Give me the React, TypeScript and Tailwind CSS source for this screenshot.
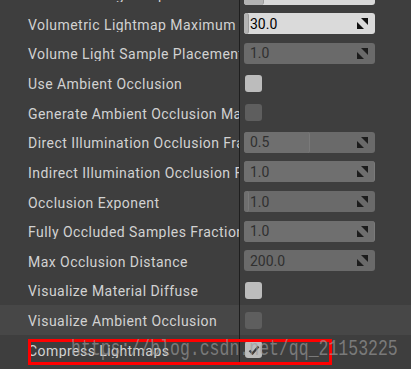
import { type ReactNode } from 'react'

type Row =
  | { label: string; kind: 'num'; value: string; fill: number; enabled: boolean }
  | { label: string; kind: 'check'; checked: boolean; enabled: boolean; hover?: boolean }

const ROWS: Row[] = [
  { label: 'Volumetric Lightmap Detail Cell Size', kind: 'num', value: '200.0', fill: 0.15, enabled: true },
  { label: 'Volumetric Lightmap Maximum Brick Memory Mb', kind: 'num', value: '30.0', fill: 0.03, enabled: true },
  { label: 'Volume Light Sample Placement Scale', kind: 'num', value: '1.0', fill: 0, enabled: false },
  { label: 'Use Ambient Occlusion', kind: 'check', checked: false, enabled: true },
  { label: 'Generate Ambient Occlusion Material Mask', kind: 'check', checked: false, enabled: false },
  { label: 'Direct Illumination Occlusion Fraction', kind: 'num', value: '0.5', fill: 0.5, enabled: false },
  { label: 'Indirect Illumination Occlusion Fraction', kind: 'num', value: '1.0', fill: 1, enabled: false },
  { label: 'Occlusion Exponent', kind: 'num', value: '1.0', fill: 0.04, enabled: false },
  { label: 'Fully Occluded Samples Fraction', kind: 'num', value: '1.0', fill: 1, enabled: false },
  { label: 'Max Occlusion Distance', kind: 'num', value: '200.0', fill: 0, enabled: false },
  { label: 'Visualize Material Diffuse', kind: 'check', checked: false, enabled: true },
  { label: 'Visualize Ambient Occlusion', kind: 'check', checked: false, enabled: false, hover: true },
  { label: 'Compress Lightmaps', kind: 'check', checked: true, enabled: true },
]

function DragIcon({ enabled }: { enabled: boolean }) {
  return (
    <svg width="11" height="11" viewBox="0 0 11 11" className="shrink-0">
      <g fill={enabled ? '#111' : '#1c1c1c'}>
        <polygon points="4,0 11,0 11,7" />
        <polygon points="0,4 0,11 7,11" />
      </g>
    </svg>
  )
}

function NumberBox({ value, fill, enabled }: { value: string; fill: number; enabled: boolean }) {
  return (
    <div
      className={
        'relative flex h-[21px] w-[131px] items-center overflow-hidden rounded-[3px] pr-[7px] pl-[6px] ' +
        (enabled ? 'bg-[#dadada] text-black' : 'bg-[#6a6a6a] text-[#303030]')
      }
    >
      {fill > 0 && (
        <div
          className={
            'absolute top-0 bottom-0 left-0 rounded-r-[3px] border-r ' +
            (enabled ? 'bg-[#b4b4b4] border-[#9c9c9c]' : 'bg-[#6f6f6f] border-[#7a7a7a]')
          }
          style={{ width: `${Math.max(fill * 131, 5)}px` }}
        />
      )}
      <span className="relative flex-1 text-[14px] leading-none">{value}</span>
      <span className="relative">
        <DragIcon enabled={enabled} />
      </span>
    </div>
  )
}

function CheckBox({ checked, enabled }: { checked: boolean; enabled: boolean }) {
  return (
    <div
      className={
        'ml-[1px] flex h-[17px] w-[17px] items-center justify-center rounded-[3px] ' +
        (enabled ? 'bg-[#bcbcbc]' : 'bg-[#5e5e5e]')
      }
    >
      {checked && (
        <svg width="12" height="10" viewBox="0 0 12 10">
          <path d="M1.5 5.5 L4.5 8.5 L10.5 1.5" fill="none" stroke="#3a3a3a" strokeWidth="2.2" />
        </svg>
      )}
    </div>
  )
}

function PropertyRow({ row }: { row: Row }) {
  let value: ReactNode
  if (row.kind === 'num') {
    value = <NumberBox value={row.value} fill={row.fill} enabled={row.enabled} />
  } else {
    value = <CheckBox checked={row.checked} enabled={row.enabled} />
  }
  const hover = row.kind === 'check' && row.hover
  return (
    <div className={'flex h-[29.64px] items-center ' + (hover ? 'bg-[#474747]' : '')}>
      <div className="w-[239px] shrink-0 overflow-hidden pt-[2px] pr-[1px] pl-[28px]">
        <span className="block whitespace-nowrap text-[14px] leading-none tracking-[0.45px] text-[#d2d2d2]">
          {row.label}
        </span>
      </div>
      <div className="h-full w-px shrink-0 bg-[#1e1e1e]" />
      <div className="flex h-full flex-1 items-center pl-[4px]">{value}</div>
    </div>
  )
}

export default function App() {
  return (
    <div
      className="relative h-[369px] w-[411px] overflow-hidden bg-[#3e3e3e]"
      style={{ fontFamily: 'Roboto, "Noto Sans", sans-serif' }}
    >
      <div className="mt-[-20.6px]">
        {ROWS.map((row) => (
          <PropertyRow key={row.label} row={row} />
        ))}
      </div>

      <div className="pointer-events-none absolute top-[339px] left-[28px] h-[26px] w-[304px] border-[3px] border-[#ff0000]" />

      <div
        className="pointer-events-none absolute top-[336px] left-[71px] origin-left scale-y-[1.35] whitespace-nowrap text-[16.5px] leading-[28px] text-[#9a9a9a] opacity-65"
        style={{ fontFamily: '"Liberation Mono", monospace' }}
      >
        https://blog.csdn.net/qq_21153225
      </div>
    </div>
  )
}
